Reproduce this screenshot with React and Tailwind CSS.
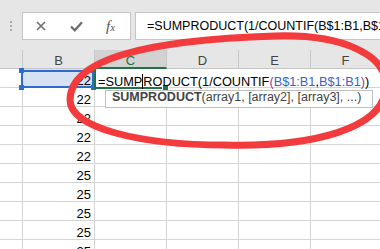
import React from "react";

const FORMULA = "=SUMPRODUCT(1/COUNTIF(B$1:B1,B$1:B1))";

// values in column B below the active row
const values = ["22", "22", "22", "22", "25", "25", "25", "25", "25"];

function HeaderCell({ label, active, className = "" }) {
  return (
    <div
      className={
        "h-full w-[72px] border-r border-[#c6c6c6] text-center leading-[13px] pt-[4px] " +
        (active
          ? "bg-[#d2d2d2] text-[#217346] border-b-2 border-b-[#217346] "
          : "text-[#444] border-b border-b-[#c6c6c6] ") +
        className
      }
    >
      {label}
    </div>
  );
}

export default function App() {
  return (
    <div className="relative w-[380px] h-[249px] overflow-hidden bg-white font-['Liberation_Sans',Arial,sans-serif] text-[13px] text-black">
      {/* Barra de fórmulas */}
      <div className="h-[50px] bg-[#e6e6e6] flex pt-[12px]">
        <div className="w-[22px] flex flex-col items-center gap-[2px] pt-[9px]">
          <span className="w-[2px] h-[2px] bg-[#a8a8a8]" />
          <span className="w-[2px] h-[2px] bg-[#a8a8a8]" />
          <span className="w-[2px] h-[2px] bg-[#a8a8a8]" />
        </div>
        <div className="w-[109px] h-[28px] bg-white border border-[#c6c6c6] flex items-center pl-[13px]">
          <svg width="10" height="10" viewBox="0 0 10 10">
            <path d="M1 1 L9 9 M9 1 L1 9" stroke="#6e6e6e" strokeWidth="1.6" />
          </svg>
          <svg className="ml-[24px]" width="13" height="11" viewBox="0 0 13 11">
            <path d="M1 5.5 L4.8 9.3 L12 1.2" stroke="#6c6c6c" strokeWidth="2.2" fill="none" />
          </svg>
          <span className="ml-[23px] font-['Liberation_Serif',serif] italic text-[15px] text-[#555] leading-none">
            f<span className="text-[11px]">x</span>
          </span>
        </div>
        <div className="ml-[4px] flex-1 h-[28px] bg-white border border-r-0 border-[#c6c6c6] flex items-center pl-[11px] overflow-hidden whitespace-nowrap text-[12.5px] leading-[13px]">
          {FORMULA}
        </div>
      </div>

      {/* Encabezados de columna */}
      <div className="flex h-[19px] bg-[#e6e6e6]">
        <div className="h-full w-[23px] border-r border-b border-[#c6c6c6]" />
        <HeaderCell label="B" />
        <HeaderCell label="C" active />
        <HeaderCell label="D" />
        <HeaderCell label="E" />
        <div className="h-full flex-1 border-b border-[#c6c6c6] text-[#444] text-center leading-[13px] pt-[4px]">
          F
        </div>
      </div>

      {/* Fila activa */}
      <div className="flex h-[19px]">
        <div className="h-full w-[23px] border-r border-b border-[#d4d4d4]" />
        <div className="relative h-full w-[72px] bg-[#d6e1f3] border-r border-b border-[#d4d4d4] text-right pr-[3px] pt-[5px] leading-[13px]">
          22
          <div className="absolute left-[-2px] top-[1px] w-[73px] h-[18px] border-2 border-[#2f6bcb]" />
          <span className="absolute left-[-4px] top-[-1px] w-[5px] h-[5px] bg-[#2f6bcb]" />
          <span className="absolute left-[-4px] top-[16px] w-[5px] h-[5px] bg-[#2f6bcb]" />
          <span className="absolute right-[-2px] top-[-1px] w-[5px] h-[5px] bg-[#2f6bcb]" />
          <span className="absolute right-[-2px] top-[16px] w-[5px] h-[5px] bg-[#2f6bcb]" />
        </div>
        <div className="relative h-full flex-1 border-b border-[#d4d4d4] whitespace-nowrap pl-[3px] pt-[5px] leading-[13px] text-[12.75px]">
          <div className="absolute left-[-1px] top-0 w-[73px] h-[20px] border-l-2 border-b-2 border-[#217346]" />
          <span className="absolute left-[68px] top-[16px] w-[5px] h-[5px] bg-[#217346] outline outline-1 outline-white" />
          <span className="relative">
            =SUMP
            <span className="inline-block w-px h-[15px] bg-black align-[-3px]" />
            RODUCT(1/COUNTIF<span className="text-[#8e3ea0]">(</span>
            <span className="text-[#3a5fcd]">B$1:B1</span>,<span className="text-[#3a5fcd]">B$1:B1</span>
            <span className="text-[#8e3ea0]">)</span>)
          </span>
        </div>
      </div>

      {/* Resto de filas */}
      {values.map((v, i) => (
        <div key={i} className="flex h-[19px]">
          <div className="h-full w-[23px] border-r border-b border-[#d4d4d4]" />
          <div className="h-full w-[72px] border-r border-b border-[#d4d4d4] text-right pr-[3px] pt-[5px] leading-[13px]">
            {v}
          </div>
          <div className="h-full w-[72px] border-r border-b border-[#d4d4d4]" />
          <div className="h-full w-[72px] border-r border-b border-[#d4d4d4]" />
          <div className="h-full w-[72px] border-r border-b border-[#d4d4d4]" />
          <div className="h-full flex-1 border-b border-[#d4d4d4]" />
        </div>
      ))}

      {/* Tooltip de argumentos */}
      <div className="absolute left-[105px] top-[90px] w-[268px] h-[18px] bg-white border border-[#bfbfbf] pl-[6px] text-[12.5px] leading-[12.5px] text-[#444] whitespace-nowrap">
        <span className="font-bold">SUMPRODUCT</span>(array1, [array2], [array3], ...)
      </div>

      {/* Elipse roja dibujada a mano */}
      <svg className="absolute inset-0 pointer-events-none" width="380" height="249" viewBox="0 0 380 249">
        <path
          d="M70 100 C70 58 150 40 275 36 C345 34 386 56 386 85 C386 130 310 147 225 145 C140 145 70 128 70 100 Z"
          fill="none"
          stroke="#f33a3c"
          strokeWidth="7"
        />
      </svg>
    </div>
  );
}
